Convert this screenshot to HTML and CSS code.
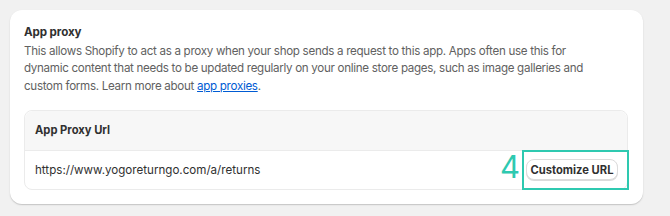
FILE: index.html
```html
<!DOCTYPE html>
<html lang="en">
<head>
    <meta charset="UTF-8">
    <meta name="viewport" content="width=device-width, initial-scale=1.0">
    <title>App proxy</title>
    <link rel="stylesheet" href="styles.css">
</head>
<body>
    <div class="card">
        <h2 class="cardTitle">App proxy</h2>
        <p class="cardText">This allows Shopify to act as a proxy when your shop sends a request to this app. Apps often use this for dynamic content that needs to be updated regularly on your online store pages, such as image galleries and custom forms. Learn more about <a href="#" class="link">app proxies</a>.</p>

        <div class="proxyBox">
            <div class="proxyHeader">App Proxy Url</div>
            <div class="proxyRow">
                <span class="proxyUrl">https://www.yogoreturngo.com/a/returns</span>
                <div class="buttonWrap">
                    <span class="stepNumber">4</span>
                    <span class="highlight"></span>
                    <button type="button" class="button">Customize URL</button>
                </div>
            </div>
        </div>
    </div>
</body>
</html>
```

FILE: styles.css
```css
body {
    margin: 0;
    padding: 10px 27px 12px 10px;
    background-color: #f1f1f1;
    font-family: Inter, "Noto Sans", sans-serif;
    font-size: 11.4px;
    color: #303030;
}
.card {
    background-color: #ffffff;
    border-radius: 12px;
    padding: 14px 15px 14px 14px;
    box-shadow: 0 1px 0 rgba(0, 0, 0, 0.08), 0 1px 2px rgba(0, 0, 0, 0.12);
}
.cardTitle {
    margin: 0 0 2px 0;
    font-size: 11.6px;
    font-weight: 650;
    line-height: 17px;
    letter-spacing: -0.1px;
}
.cardText {
    margin: 0 0 15px 0;
    max-width: 568px;
    color: #616161;
    font-size: 11.6px;
    letter-spacing: -0.3px;
    line-height: 17.3px;
}
.link {
    color: #005bd3;
}
.proxyBox {
    border: 1px solid #ebebeb;
    border-radius: 8px;
}
.proxyHeader {
    background-color: #f7f7f7;
    border-radius: 8px 8px 0 0;
    border-bottom: 1px solid #ebebeb;
    height: 39px;
    line-height: 39px;
    padding: 0 10px;
    font-size: 11.2px;
    font-weight: 650;
}
.proxyRow {
    display: flex;
    align-items: center;
    justify-content: space-between;
    height: 38px;
    padding: 0 9px 0 10px;
}
.proxyUrl {
    font-size: 11.6px;
}
.buttonWrap {
    position: relative;
    display: flex;
}
.button {
    font-family: inherit;
    font-size: 11.2px;
    font-weight: 650;
    color: #303030;
    background-color: #ffffff;
    border: 1px solid #dcdcdc;
    border-radius: 8px;
    height: 21px;
    width: 92px;
    padding: 0;
    white-space: nowrap;
    box-shadow: 0 1px 0 rgba(0, 0, 0, 0.14);
}
.highlight {
    position: absolute;
    top: -9px;
    left: -4px;
    width: 103px;
    height: 36px;
    border: 2px solid #2ec9b0;
}
.stepNumber {
    position: absolute;
    top: -10px;
    left: -26px;
    font-size: 31px;
    line-height: 36px;
    color: #2ec9b0;
}
```
